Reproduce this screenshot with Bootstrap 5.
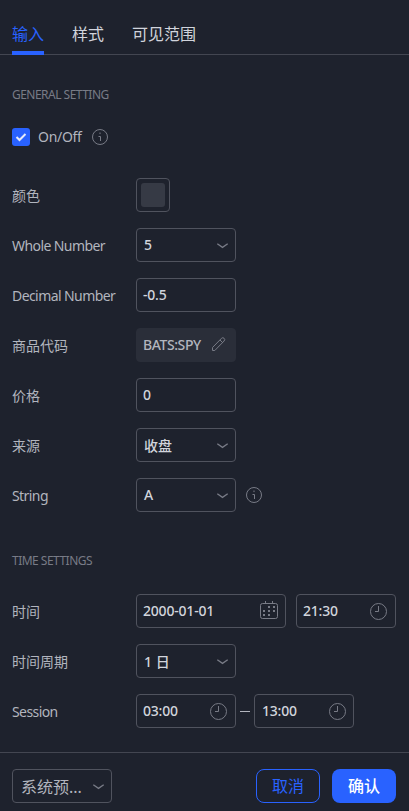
<!DOCTYPE html>
<html lang="zh-CN" data-bs-theme="dark">
<head>
<meta charset="utf-8">
<meta name="viewport" content="width=device-width, initial-scale=1">
<title>设置</title>
<link href="https://cdn.jsdelivr.net/npm/bootstrap@5.3.0/dist/css/bootstrap.min.css" rel="stylesheet">
<style>
body{background:#1e222d;color:#b2b5be;font-family:"Trebuchet MS","Noto Sans","Noto Sans CJK SC",sans-serif;font-size:14px;line-height:20px;width:409px;height:811px;overflow:hidden}
.tabs{height:55px;border-bottom:1px solid #434651;gap:28px;padding:0 12px;flex-shrink:0}
.tab{font-size:16px;line-height:24px;color:#d1d4dc;padding:22px 0 5px;height:55px;border-bottom:4px solid transparent}
.tab.on{color:#2962ff;border-color:#2962ff}
.settings{padding:0 12px}
.group{font-size:12px;color:#787b86;height:20px;letter-spacing:-.52px}
.group.first{margin:30px 0 22px}
.group.second{margin:39px 0 23px}
.check-row{height:20px;margin-bottom:31px}
.check-row .name{width:45px;margin-left:8px;margin-right:8px;letter-spacing:-.3px}
.tick{width:18px;height:18px;border-radius:3px;background:#2962ff}
.line{height:34px;margin-bottom:16px}
.caption{width:124px;white-space:nowrap;letter-spacing:-.58px;padding-top:1px}
.caption.zh{letter-spacing:0}
.field{width:100px;height:34px;border:1px solid #50535e;border-radius:4px;padding:0 7px 0 6px;color:#d1d4dc;font-weight:500;letter-spacing:-.2px;white-space:nowrap}
.field.pick{padding:0 5px 0 7px}
.field.han span{letter-spacing:0;padding-top:2px}
.field.wide{width:150px}
.field.symbol{background:#2a2e39;border-color:#2a2e39;color:#b2b5be;letter-spacing:-.42px}
.field.hour{margin-left:10px}
.field.until{padding:0 6px 0 7px}
.swatch{width:34px;height:34px;border:1px solid #50535e;border-radius:4px;padding:4px}
.swatch span{display:block;height:24px;border-radius:3px;background:#363a45}
svg{display:block;fill:none;stroke:#787b86;flex-shrink:0}
.hint{margin-left:9px}
.bottom{height:59px;border-top:1px solid #434651;padding:16px 13px 8px 12px;margin-top:auto;flex-shrink:0;gap:12px}
.bottom .field{color:#b2b5be;padding-left:8px}
.bottom .field.han span{font-size:16px;font-weight:400}
.act{width:64px;height:34px;padding:0;border-radius:8px;font-size:16px;line-height:30px}
.act.cancel{border:1px solid #2962ff;color:#2962ff}
.act.ok{background:#2962ff;color:#fff;font-weight:500}
.dash{width:18px}
.dash i{display:block;width:10px;height:1px;background:#b2b5be;margin:1px auto 0}
</style>
<script src="https://cdn.jsdelivr.net/npm/bootstrap@5.3.0/dist/js/bootstrap.bundle.min.js"></script>
</head>
<body class="d-flex flex-column m-0">
<svg width="0" height="0" class="position-absolute">
<symbol id="chev" viewBox="0 0 18 18"><path d="M5.300 7.700l5.200 3.700 5.200-3.700" stroke-width="1.3"/></symbol>
<symbol id="info" viewBox="0 0 18 18"><circle cx="9" cy="9" r="7.5"/><path d="M7.500 8.500h2V13M9 4.500v1.600"/></symbol>
<symbol id="clock" viewBox="0 0 18 18"><circle cx="8.500" cy="9.500" r="8"/><path d="M8.500 4v5.500H5"/></symbol>
<symbol id="cal" viewBox="0 -1 18 20"><rect x=".5" y="1.500" width="17" height="15" rx="2"/><path d="M5.500-1v3M12.500-1v3"/><path d="M8 5h2M13 5h2M3 9h2M8 9h2M13 9h2M3 13h2M8 13h2" stroke-width="2"/></symbol>
<symbol id="pen" viewBox="0 0 18 18"><path d="M2.500 14.500v-3l9-9.200q1.300-1.200 2.600 0t0 2.700l-9.300 9.500zM10 4l3 3"/></symbol>
</svg>
<nav class="tabs d-flex"><div class="tab on">输入</div><div class="tab">样式</div><div class="tab">可见范围</div></nav>
<main class="settings">
<div class="group first">GENERAL SETTING</div>
<div class="check-row d-flex align-items-center"><span class="tick d-flex align-items-center justify-content-center"><svg width="12" height="10" viewBox="0 0 12 10"><path d="M1.500 5l3 3 6-6" stroke="#e6ebfa" stroke-width="2"/></svg></span><span class="name">On/Off</span><svg width="18" height="18"><use href="#info"/></svg></div>
<div class="line d-flex align-items-center"><div class="caption zh">颜色</div><div class="swatch"><span></span></div></div>
<div class="line d-flex align-items-center"><div class="caption">Whole Number</div><div class="field pick d-flex align-items-center justify-content-between"><span>5</span><svg width="18" height="18"><use href="#chev"/></svg></div></div>
<div class="line d-flex align-items-center"><div class="caption">Decimal Number</div><div class="field d-flex align-items-center"><span>-0.5</span></div></div>
<div class="line d-flex align-items-center"><div class="caption zh">商品代码</div><div class="field symbol d-flex align-items-center justify-content-between"><span>BATS:SPY</span><svg width="18" height="18"><use href="#pen"/></svg></div></div>
<div class="line d-flex align-items-center"><div class="caption zh">价格</div><div class="field d-flex align-items-center"><span>0</span></div></div>
<div class="line d-flex align-items-center"><div class="caption zh">来源</div><div class="field pick han d-flex align-items-center justify-content-between"><span>收盘</span><svg width="18" height="18"><use href="#chev"/></svg></div></div>
<div class="line d-flex align-items-center"><div class="caption">String</div><div class="field pick d-flex align-items-center justify-content-between"><span>A</span><svg width="18" height="18"><use href="#chev"/></svg></div><svg class="hint" width="18" height="18"><use href="#info"/></svg></div>
<div class="group second">TIME SETTINGS</div>
<div class="line d-flex align-items-center"><div class="caption zh">时间</div><div class="field wide d-flex align-items-center justify-content-between"><span>2000-01-01</span><svg width="18" height="20"><use href="#cal"/></svg></div><div class="field hour d-flex align-items-center justify-content-between"><span>21:30</span><svg width="18" height="18"><use href="#clock"/></svg></div></div>
<div class="line d-flex align-items-center"><div class="caption zh">时间周期</div><div class="field pick han d-flex align-items-center justify-content-between"><span>1 日</span><svg width="18" height="18"><use href="#chev"/></svg></div></div>
<div class="line d-flex align-items-center"><div class="caption">Session</div><div class="field d-flex align-items-center justify-content-between"><span>03:00</span><svg width="18" height="18"><use href="#clock"/></svg></div><div class="dash"><i></i></div><div class="field until d-flex align-items-center justify-content-between"><span>13:00</span><svg width="18" height="18"><use href="#clock"/></svg></div></div>
</main>
<footer class="bottom d-flex align-items-start"><div class="field pick han d-flex align-items-center justify-content-between"><span>系统预...</span><svg width="18" height="18"><use href="#chev"/></svg></div><button class="btn act cancel ms-auto">取消</button><button class="btn act ok">确认</button></footer>
</body>
</html>
